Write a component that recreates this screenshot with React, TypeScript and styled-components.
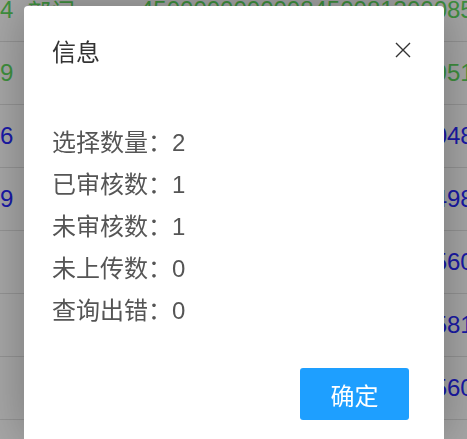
import styled, { createGlobalStyle } from "styled-components";

const GlobalStyle = createGlobalStyle`
  html, body {
    margin: 0;
    padding: 0;
    width: 100%;
    height: 100%;
    overflow: hidden;
    background: #fff;
  }
  body {
    font-family: "Liberation Sans", "Noto Sans CJK SC", sans-serif;
  }
`;

type Tone = "green" | "blue";

// the table behind the dialog, only its edges show
const rows: { id: string; name: string; code: string; tone: Tone }[] = [
  { id: "4", name: "部门", code: "4500000000008450081300085", tone: "green" },
  { id: "9", name: "部门", code: "4500000000008450081300951", tone: "green" },
  { id: "6", name: "部门", code: "4500000000008450081300048", tone: "blue" },
  { id: "9", name: "部门", code: "4500000000008450081300498", tone: "blue" },
  { id: "", name: "", code: "4500000000008450081300560", tone: "blue" },
  { id: "", name: "", code: "4500000000008450081300581", tone: "blue" },
  { id: "", name: "", code: "4500000000008450081300560", tone: "blue" },
];

const stats = [
  { label: "选择数量", value: 2 },
  { label: "已审核数", value: 1 },
  { label: "未审核数", value: 1 },
  { label: "未上传数", value: 0 },
  { label: "查询出错", value: 0 },
];

const Table = styled.div`
  margin-top: -21px;
`;

const Row = styled.div<{ $tone: Tone }>`
  display: flex;
  align-items: center;
  height: 63px;
  box-sizing: border-box;
  border-bottom: 1px solid #e2e2e2;
  font-size: 24px;
  white-space: nowrap;
  color: ${(p) => (p.$tone === "green" ? "#5fdc5f" : "#2828ff")};
`;

const IdCell = styled.span`
  width: 13px;
  flex: none;
  text-align: right;
`;

const NameCell = styled.span`
  width: 113px;
  margin-left: 14px;
  flex: none;
`;

const CodeCell = styled.span`
  flex: none;
`;

const Shade = styled.div`
  position: fixed;
  inset: 0;
  background: rgba(0, 0, 0, 0.35);
`;

const Dialog = styled.div`
  position: fixed;
  top: 6px;
  bottom: 0;
  left: 24px;
  width: 420px;
  background: #fff;
  border-radius: 4px 4px 0 0;
  box-shadow: 1px 1px 50px rgba(0, 0, 0, 0.3);
  display: flex;
  flex-direction: column;
`;

const Header = styled.div`
  display: flex;
  align-items: center;
  justify-content: space-between;
  height: 36px;
  padding: 26px 33px 0 28px;
`;

const Title = styled.span`
  font-size: 24px;
  color: #333;
`;

const CloseButton = styled.button`
  display: flex;
  padding: 0;
  border: none;
  background: none;
  cursor: pointer;
`;

const Body = styled.div`
  margin-top: 54px;
  padding: 0 28px;
  font-size: 24px;
  line-height: 42px;
  color: #555;
`;

const Line = styled.div`
  white-space: nowrap;
`;

const Footer = styled.div`
  display: flex;
  justify-content: flex-end;
  padding: 36px 35px 0;
`;

const Confirm = styled.button`
  width: 109px;
  height: 52px;
  border: none;
  border-radius: 3px;
  background: #1e9fff;
  color: #fff;
  font-family: inherit;
  font-size: 24px;
  cursor: pointer;
`;

export default function App() {
  return (
    <>
      <GlobalStyle />
      <Table>
        {rows.map((r, i) => (
          <Row key={i} $tone={r.tone}>
            <IdCell>{r.id}</IdCell>
            <NameCell>{r.name}</NameCell>
            <CodeCell>{r.code}</CodeCell>
          </Row>
        ))}
      </Table>
      <Shade />
      <Dialog>
        <Header>
          <Title>信息</Title>
          <CloseButton aria-label="关闭">
            <svg width="16" height="16" viewBox="0 0 16 16">
              <path d="M1 1L15 15M15 1L1 15" stroke="#333" strokeWidth="1.4" fill="none" />
            </svg>
          </CloseButton>
        </Header>
        <Body>
          {stats.map((s) => (
            <Line key={s.label}>
              {s.label}：{s.value}
            </Line>
          ))}
        </Body>
        <Footer>
          <Confirm>确定</Confirm>
        </Footer>
      </Dialog>
    </>
  );
}
